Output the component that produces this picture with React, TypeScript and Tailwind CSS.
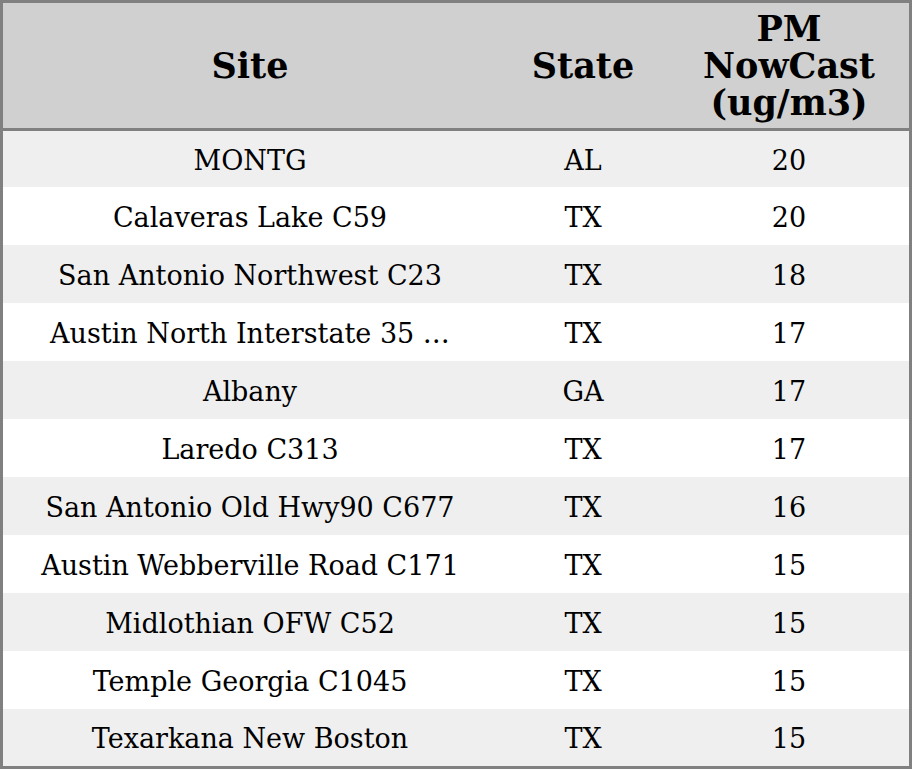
import React from "react";

const rows: [string, string, string][] = [
  ["MONTG", "AL", "20"],
  ["Calaveras Lake C59", "TX", "20"],
  ["San Antonio Northwest C23", "TX", "18"],
  ["Austin North Interstate 35 …", "TX", "17"],
  ["Albany", "GA", "17"],
  ["Laredo C313", "TX", "17"],
  ["San Antonio Old Hwy90 C677", "TX", "16"],
  ["Austin Webberville Road C171", "TX", "15"],
  ["Midlothian OFW C52", "TX", "15"],
  ["Temple Georgia C1045", "TX", "15"],
  ["Texarkana New Boston", "TX", "15"],
];

const heights = ["h-[56px]", "h-[58px]", "h-[58px]", "h-[58px]", "h-[58px]", "h-[58px]", "h-[58px]", "h-[58px]", "h-[58px]", "h-[58px]", "h-[57px]"];

export default function App() {
  return (
    <div
      className="w-[912px] h-[769px] bg-white border-[3px] border-[#808080] flex flex-col text-black"
      style={{ fontFamily: '"DejaVu Serif", serif' }}
    >
      <div className="h-[128px] shrink-0 bg-[#d0d0d0] border-b-[3px] border-[#808080] grid grid-cols-[494px_172px_240px] items-center text-[35px] font-bold leading-[37px] text-center">
        <div>Site</div>
        <div>State</div>
        <div>
          PM
          <br />
          NowCast
          <br />
          (ug/m3)
        </div>
      </div>
      {rows.map((r, i) => (
        <div
          key={i}
          className={`${heights[i]} shrink-0 grid grid-cols-[494px_172px_240px] items-center text-[27px] text-center pt-[4px] ${i % 2 === 0 ? "bg-[#efefef]" : "bg-white"}`}
        >
          <div className="whitespace-nowrap">{r[0]}</div>
          <div>{r[1]}</div>
          <div>{r[2]}</div>
        </div>
      ))}
    </div>
  );
}
